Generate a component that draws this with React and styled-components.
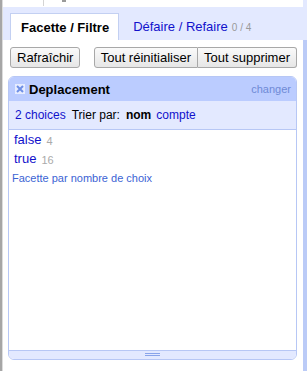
import React from "react";
import styled, { createGlobalStyle } from "styled-components";

const Global = createGlobalStyle`
  html, body { margin: 0; padding: 0; background: #fff; }
  body { font-family: "Liberation Sans", Arial, sans-serif; }
`;

const Page = styled.div`
  width: 307px;
  height: 371px;
  display: flex;
  overflow: hidden;
  background: #fff;
`;

const LeftEdge = styled.div`
  width: 2px;
  background: #a6a6a6;
  border-right: 1px solid #dcdcdc;
  flex: none;
`;

const RightEdge = styled.div`
  width: 4px;
  flex: none;
  display: flex;
  flex-direction: column;
`;

const EdgePart = styled.div`
  height: ${(p) => (p.$h ? `${p.$h}px` : "auto")};
  flex: ${(p) => (p.$h ? "none" : "1")};
  background: ${(p) => p.$bg};
`;

const Main = styled.div`
  flex: 1;
  display: flex;
  flex-direction: column;
  min-width: 0;
`;

const Stub = styled.div`
  height: 7px;
  display: flex;
  align-items: flex-start;
  padding-left: 40px;
  gap: 18px;
`;

const StubLine = styled.div`
  width: 1px;
  height: 6px;
  background: #d4d4d4;
`;

const StubMark = styled.div`
  width: 4px;
  height: 2px;
  background: #9a9a9a;
`;

const TabBar = styled.div`
  height: 33px;
  background: #e3e9ff;
  display: flex;
  align-items: flex-end;
  padding-left: 7px;
  box-sizing: border-box;
`;

const Tab = styled.div`
  height: 27px;
  box-sizing: border-box;
  display: flex;
  align-items: center;
  font-size: 13px;
  white-space: nowrap;
  ${(p) =>
    p.$active
      ? `
    background: #fff;
    border: 1px solid #c3d0f2;
    border-bottom: none;
    padding: 0 9px 0 10px;
    font-weight: bold;
    color: #000;
  `
      : `
    padding: 0 0 0 14px;
    color: #1111cc;
  `}
`;

const TabCount = styled.span`
  font-size: 10px;
  color: #999;
  margin-left: 4px;
  margin-top: 2px;
`;

const Content = styled.div`
  flex: 1;
  display: flex;
  flex-direction: column;
  padding: 7px 6px 11px 5px;
  min-height: 0;
`;

const ButtonRow = styled.div`
  display: flex;
  align-items: center;
  padding-left: 2px;
  margin-bottom: 8px;
`;

const Group = styled.div`
  display: flex;
  margin-left: auto;
`;

const Button = styled.button`
  font-family: "Liberation Sans", Arial, sans-serif;
  font-size: 13px;
  color: #000;
  height: 21px;
  padding: 0 6px;
  background: linear-gradient(#fafafa, #e6e6e6);
  border: 1px solid #a8a8a8;
  border-radius: ${(p) =>
    p.$pos === "left" ? "3px 0 0 3px" : p.$pos === "right" ? "0 3px 3px 0" : "3px"};
  ${(p) => (p.$pos === "right" ? "border-left: none;" : "")}
  line-height: 19px;
  cursor: pointer;
`;

const Panel = styled.div`
  flex: 1;
  display: flex;
  flex-direction: column;
  border: 1px solid #b7c7f5;
  border-radius: 6px;
  overflow: hidden;
  min-height: 0;
`;

const Header = styled.div`
  height: 24px;
  background: #bbccff;
  display: flex;
  align-items: center;
  padding: 0 5px 0 6px;
  flex: none;
`;

const Title = styled.span`
  font-weight: bold;
  font-size: 13px;
  color: #000;
  margin-left: 4px;
`;

const Change = styled.a`
  margin-left: auto;
  font-size: 11px;
  color: #6f8ad6;
  text-decoration: none;
`;

const Controls = styled.div`
  height: 28px;
  background: #e3e9ff;
  border-bottom: 1px solid #b7c7f5;
  display: flex;
  align-items: center;
  gap: 6px;
  padding-left: 6px;
  font-size: 12px;
  flex: none;
`;

const Link = styled.a`
  color: #1111cc;
  text-decoration: none;
  ${(p) => (p.$tight ? "margin-left: -1px;" : "")}
`;

const Label = styled.span`
  color: #000;
  font-weight: ${(p) => (p.$bold ? "bold" : "normal")};
`;

const Body = styled.div`
  flex: 1;
  background: #fff;
  display: flex;
  flex-direction: column;
`;

const Choice = styled.div`
  height: 19px;
  display: flex;
  align-items: center;
  padding-left: 5px;
  font-size: 13px;
`;

const Count = styled.span`
  font-size: 11px;
  color: #aaa;
  margin-left: 5px;
  margin-top: 2px;
`;

const SmallLink = styled.a`
  font-size: 11px;
  color: #3b63d4;
  text-decoration: none;
  padding-left: 3px;
  margin-top: 3px;
  line-height: 15px;
`;

const Footer = styled.div`
  height: 7px;
  flex: none;
  background: #e3e9ff;
  border-top: 1px solid #b7c7f5;
  display: flex;
  justify-content: center;
  align-items: flex-start;
  padding-top: 1px;
  box-sizing: content-box;
`;

const Grip = styled.div`
  width: 15px;
  height: 1px;
  border-top: 1px solid #89a4ea;
  border-bottom: 1px solid #89a4ea;
  margin-top: 1px;
`;

const CloseIcon = () => (
  <svg width="10" height="10" viewBox="0 0 10 10">
    <rect x="0" y="0" width="10" height="10" fill="#e6ecff" />
    <path d="M2 2 L8 8 M8 2 L2 8" stroke="#6e8fe6" strokeWidth="2" />
  </svg>
);

export default function App() {
  return (
    <Page>
      <Global />
      <LeftEdge />
      <Main>
        <Stub>
          <StubLine />
          <StubMark />
        </Stub>
        <TabBar>
          <Tab $active>Facette / Filtre</Tab>
          <Tab>
            Défaire / Refaire<TabCount>0 / 4</TabCount>
          </Tab>
        </TabBar>
        <Content>
          <ButtonRow>
            <Button>Rafraîchir</Button>
            <Group>
              <Button $pos="left">Tout réinitialiser</Button>
              <Button $pos="right">Tout supprimer</Button>
            </Group>
          </ButtonRow>
          <Panel>
            <Header>
              <CloseIcon />
              <Title>Deplacement</Title>
              <Change href="#">changer</Change>
            </Header>
            <Controls>
              <Link href="#">2 choices</Link>
              <Label>Trier par:</Label>
              <Label $bold>nom</Label>
              <Link href="#" $tight>
                compte
              </Link>
            </Controls>
            <Body>
              <Choice>
                <Link href="#">false</Link>
                <Count>4</Count>
              </Choice>
              <Choice>
                <Link href="#">true</Link>
                <Count>16</Count>
              </Choice>
              <SmallLink href="#">Facette par nombre de choix</SmallLink>
            </Body>
            <Footer>
              <Grip />
            </Footer>
          </Panel>
        </Content>
      </Main>
      <RightEdge>
        <EdgePart $h={40} $bg="#e3e9ff" />
        <EdgePart $bg="#bbcbf7" />
      </RightEdge>
    </Page>
  );
}
